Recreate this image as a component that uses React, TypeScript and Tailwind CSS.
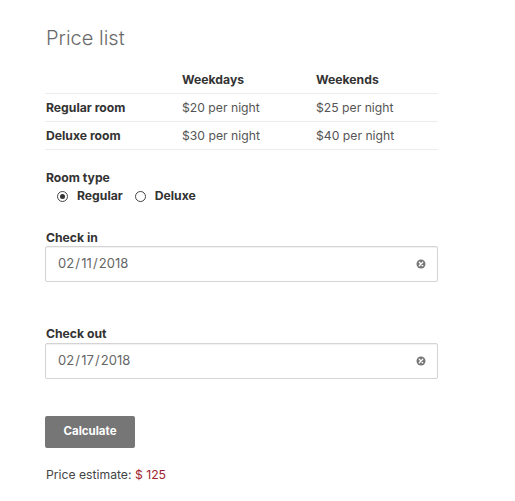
import React from "react";

const rows = [
  { name: "Regular room", weekdays: "$20 per night", weekends: "$25 per night" },
  { name: "Deluxe room", weekdays: "$30 per night", weekends: "$40 per night" },
];

const ClearIcon = () => (
  <svg width="10" height="10" viewBox="0 0 10 10">
    <circle cx="5" cy="5" r="4.5" fill="#777" />
    <path d="M3.3 3.3 L6.7 6.7 M6.7 3.3 L3.3 6.7" stroke="#fff" strokeWidth="1.3" strokeLinecap="round" />
  </svg>
);

const Radio = ({ checked }: { checked?: boolean }) => (
  <span className="w-[11px] h-[11px] rounded-full border border-[#444] flex items-center justify-center bg-white">
    {checked && <span className="w-[5px] h-[5px] rounded-full bg-[#333]" />}
  </span>
);

const DateField = ({ value }: { value: string }) => (
  <div className="h-[36px] w-[393px] border border-[#d4d4d4] rounded-[2px] flex items-center justify-between pl-[12px] pr-[11px] shadow-[inset_0_1px_1px_rgba(0,0,0,0.06)]">
    <span className="text-[13px] text-[#666]">{value}</span>
    <ClearIcon />
  </div>
);

export default function App() {
  return (
    <div className="w-[515px] h-[501px] bg-white font-['Inter',sans-serif] pl-[45px] pt-[24px] flex flex-col">
      <h2 className="text-[20px] font-light text-[#6a6a6a] leading-[28px] ml-[1px]">Price list</h2>

      <div className="mt-[14px] w-[393px] flex flex-col text-[12.2px]">
        <div className="h-[28px] pt-[2px] flex items-center border-b border-[#ececec] font-bold text-[#333]">
          <div className="w-[137px] pl-[1px]"></div>
          <div className="w-[134px]">Weekdays</div>
          <div>Weekends</div>
        </div>
        {rows.map(r => (
          <div key={r.name} className="h-[28px] pt-[2px] flex items-center border-b border-[#ececec]">
            <div className="w-[137px] pl-[1px] font-bold text-[#333]">{r.name}</div>
            <div className="w-[134px] text-[#555]">{r.weekdays}</div>
            <div className="text-[#555]">{r.weekends}</div>
          </div>
        ))}
      </div>

      <div className="mt-[20px] leading-[16px] text-[12.2px] font-bold text-[#333] pl-[1px]">Room type</div>
      <div className="mt-[1px] h-[18px] flex items-center text-[12.2px] font-bold text-[#333] pl-[12px]">
        <label className="flex items-center gap-[9px]">
          <Radio checked />
          <span>Regular</span>
        </label>
        <label className="flex items-center gap-[9px] ml-[12px]">
          <Radio />
          <span>Deluxe</span>
        </label>
      </div>

      <div className="mt-[24px] pt-[1px] leading-[16px] text-[12.2px] font-bold text-[#333] pl-[1px]">Check in</div>
      <div>
        <DateField value={"02\u200A/\u200A11\u200A/\u200A2018"} />
      </div>

      <div className="mt-[44px] leading-[16px] text-[12.2px] font-bold text-[#333] pl-[1px]">Check out</div>
      <div className="mt-[1px]">
        <DateField value={"02\u200A/\u200A17\u200A/\u200A2018"} />
      </div>

      <button className="mt-[37px] w-[90px] h-[32px] bg-[#767676] rounded-[2px] text-white text-[11.5px] font-bold">
        Calculate
      </button>

      <div className="mt-[19px] leading-[16px] text-[12.2px] text-[#444] pl-[1px]">
        Price estimate: <span className="text-[#a0222f]">$ 125</span>
      </div>
    </div>
  );
}
